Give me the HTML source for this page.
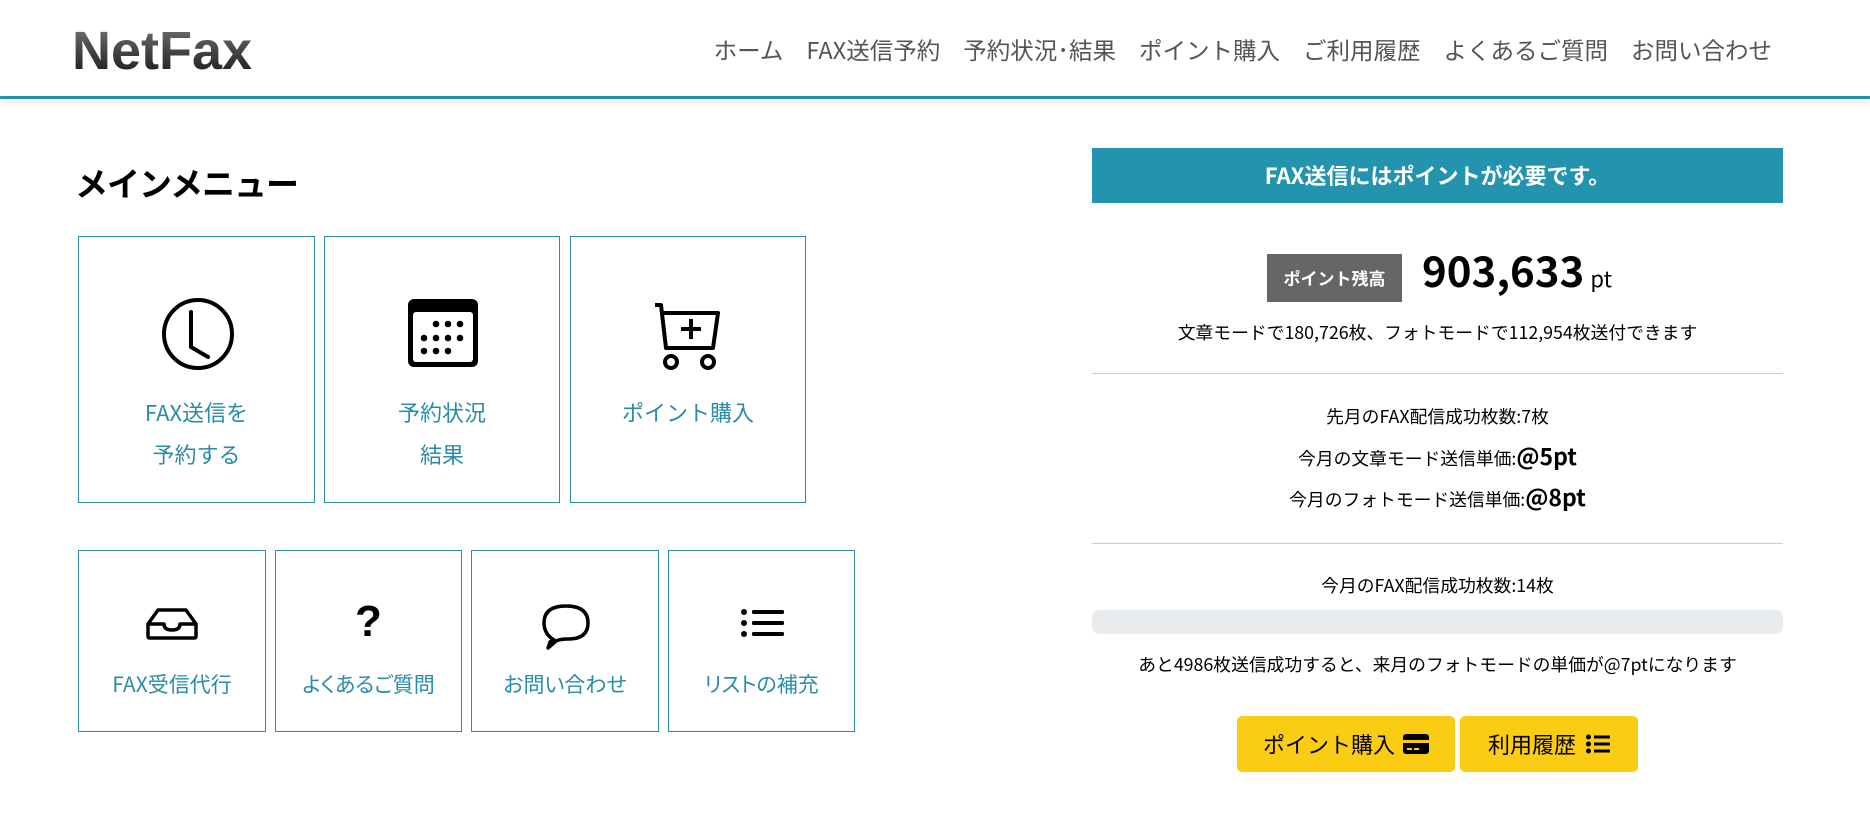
<!DOCTYPE html>
<html><head><meta charset="utf-8"><style>
*{margin:0;padding:0;box-sizing:border-box}
body{width:1870px;height:814px;background:#fff;font-family:"Liberation Sans","Noto Sans CJK JP",sans-serif;position:relative;overflow:hidden;color:#000}
.a{position:absolute}
.hdr{left:0;top:0;width:1870px;height:99px;border-bottom:3px solid #2591ab;box-shadow:0 4px 8px rgba(0,0,0,.08);background:#fff}
.logo{left:72px;top:20px;font:bold 54px "Liberation Sans",sans-serif;letter-spacing:0;background:linear-gradient(#7a7a7a,#111);-webkit-background-clip:text;color:transparent}
.nav{top:32px;right:98px;font-size:23.5px;color:#555;white-space:nowrap;font-family:"Noto Sans CJK JP",sans-serif}
.nav span{margin-left:23px}
h1{left:75px;top:158px;font:bold 33px "Noto Sans CJK JP",sans-serif;letter-spacing:-1px}
.t{border:1px solid #2a8ca8;background:#fff;text-align:center;color:#2a8ca8;font-size:22px;font-family:"Noto Sans CJK JP",sans-serif}
.t svg{position:absolute}
.lab{position:absolute;left:0;width:100%;line-height:42px}
.s{font-size:21px;font-feature-settings:"palt"}
.c{text-align:center;font-family:"Noto Sans CJK JP",sans-serif;font-size:17.8px;width:691px;left:1092px}
.hr{left:1092px;width:691px;height:1px;background:#ccc}
.btn{background:#facd14;border-radius:5px;font-size:22px;font-family:"Noto Sans CJK JP",sans-serif;display:flex;align-items:center;justify-content:center;height:56px;top:716px}
</style></head><body>
<div class="a hdr"></div>
<div class="a logo">NetFax</div>
<div class="a nav"><span>ホーム</span><span>FAX送信予約</span><span>予約状況･結果</span><span>ポイント購入</span><span>ご利用履歴</span><span>よくあるご質問</span><span>お問い合わせ</span></div>
<h1 class="a">メインメニュー</h1>

<div class="a t" style="left:78px;top:236px;width:237px;height:267px">
<svg style="left:82px;top:60px" width="74" height="74" viewBox="0 0 74 74"><circle cx="37" cy="37" r="34" fill="none" stroke="#000" stroke-width="4"/><path d="M30 15V50L47 60" fill="none" stroke="#000" stroke-width="4" stroke-linecap="round"/></svg>
<div class="lab" style="top:154px">FAX送信を<br>予約する</div></div>
<div class="a t" style="left:324px;top:236px;width:236px;height:267px">
<svg style="left:81px;top:60px" width="74" height="72" viewBox="0 0 74 72"><rect x="2" y="2" width="70" height="68" rx="6" fill="#000"/><rect x="7" y="15" width="60" height="50" rx="3" fill="#fff"/><g fill="#000"><circle cx="30" cy="27" r="3.3"/><circle cx="42" cy="27" r="3.3"/><circle cx="54" cy="27" r="3.3"/><circle cx="18" cy="41" r="3.3"/><circle cx="30" cy="41" r="3.3"/><circle cx="42" cy="41" r="3.3"/><circle cx="54" cy="41" r="3.3"/><circle cx="18" cy="54" r="3.3"/><circle cx="30" cy="54" r="3.3"/><circle cx="42" cy="54" r="3.3"/></g></svg>
<div class="lab" style="top:154px">予約状況<br>結果</div></div>
<div class="a t" style="left:570px;top:236px;width:236px;height:267px">
<svg style="left:82px;top:64px" width="68" height="70" viewBox="0 0 68 70"><path d="M2 4H8L13 47H60L65 12H10" fill="none" stroke="#000" stroke-width="4" stroke-linejoin="round"/><path d="M38 18V38M28 28H48" stroke="#000" stroke-width="4"/><circle cx="18" cy="61" r="6" fill="none" stroke="#000" stroke-width="4"/><circle cx="55" cy="61" r="6" fill="none" stroke="#000" stroke-width="4"/></svg>
<div class="lab" style="top:154px">ポイント購入</div></div>

<div class="a t" style="left:78px;top:550px;width:188px;height:182px">
<svg style="left:67px;top:57px" width="52" height="32" viewBox="0 0 52 32"><path d="M12 2H40L50 16V28Q50 30 48 30H4Q2 30 2 28V16Z M2 16H18Q18 22 26 22Q34 22 34 16H50" fill="none" stroke="#000" stroke-width="3.5" stroke-linejoin="round"/></svg>
<div class="lab s" style="top:112px">FAX受信代行</div></div>
<div class="a t" style="left:275px;top:550px;width:187px;height:182px">
<div style="position:absolute;left:0;width:100%;top:46px;font:bold 44px 'Liberation Sans',sans-serif;color:#000">?</div>
<div class="lab s" style="top:112px">よくあるご質問</div></div>
<div class="a t" style="left:471px;top:550px;width:188px;height:182px">
<svg style="left:68px;top:52px" width="52" height="48" viewBox="0 0 52 48"><path d="M14 37Q4 31 4 20Q4 3 26 3Q48 3 48 20Q48 36 28 36Q20 36 16 38L8 45L10 39Z" fill="none" stroke="#000" stroke-width="3.5" stroke-linejoin="round"/></svg>
<div class="lab s" style="top:112px">お問い合わせ</div></div>
<div class="a t" style="left:668px;top:550px;width:187px;height:182px">
<svg style="left:72px;top:58px" width="44" height="28" viewBox="0 0 44 28"><g fill="#000"><circle cx="3" cy="3" r="3"/><circle cx="3" cy="14" r="3"/><circle cx="3" cy="25" r="3"/><rect x="11" y="1" width="32" height="4" rx="1.5"/><rect x="11" y="12" width="32" height="4" rx="1.5"/><rect x="11" y="23" width="32" height="4" rx="1.5"/></g></svg>
<div class="lab s" style="top:112px">リストの補充</div></div>

<div class="a" style="left:1092px;top:148px;width:691px;height:55px;background:#2493ad;color:#fff;font:bold 22px 'Noto Sans CJK JP',sans-serif;text-align:center;line-height:55px">FAX送信にはポイントが必要です。</div>
<div class="a" style="left:1267px;top:254px;width:135px;height:48px;background:#666;color:#fff;font:bold 17px 'Noto Sans CJK JP',sans-serif;text-align:center;line-height:48px">ポイント残高</div>
<div class="a" style="left:1422px;top:240px;font:bold 42px 'Noto Sans CJK JP',sans-serif;white-space:nowrap;line-height:60px">903,633<span style="font-weight:normal;font-size:22px;margin-left:6px">pt</span></div>
<div class="a c" style="top:319px">文章モードで180,726枚、フォトモードで112,954枚送付できます</div>
<div class="a hr" style="top:373px"></div>
<div class="a c" style="top:403px">先月のFAX配信成功枚数:7枚</div>
<div class="a c" style="top:438px">今月の文章モード送信単価:<b style="font-size:23px">@5pt</b></div>
<div class="a c" style="top:479px">今月のフォトモード送信単価:<b style="font-size:23px">@8pt</b></div>
<div class="a hr" style="top:543px"></div>
<div class="a c" style="top:572px">今月のFAX配信成功枚数:14枚</div>
<div class="a" style="left:1092px;top:610px;width:691px;height:24px;background:#e9ecef;border-radius:7px"></div>
<div class="a c" style="top:651px">あと4986枚送信成功すると、来月のフォトモードの単価が@7ptになります</div>
<div class="a btn" style="left:1237px;width:218px">ポイント購入 <svg style="margin-left:8px" width="26" height="20" viewBox="0 0 26 20"><rect x="0" y="0" width="26" height="20" rx="3" fill="#000"/><rect x="0" y="6" width="26" height="3" fill="#facd14"/><rect x="4" y="14" width="5" height="2" fill="#facd14"/><rect x="11" y="14" width="5" height="2" fill="#facd14"/></svg></div>
<div class="a btn" style="left:1460px;width:178px">利用履歴 <svg style="margin-left:10px" width="24" height="20" viewBox="0 0 24 20"><g fill="#000"><circle cx="2.5" cy="3" r="2.5"/><circle cx="2.5" cy="10" r="2.5"/><circle cx="2.5" cy="17" r="2.5"/><rect x="8" y="1.5" width="16" height="3"/><rect x="8" y="8.5" width="16" height="3"/><rect x="8" y="15.5" width="16" height="3"/></g></svg></div>
</body></html>
